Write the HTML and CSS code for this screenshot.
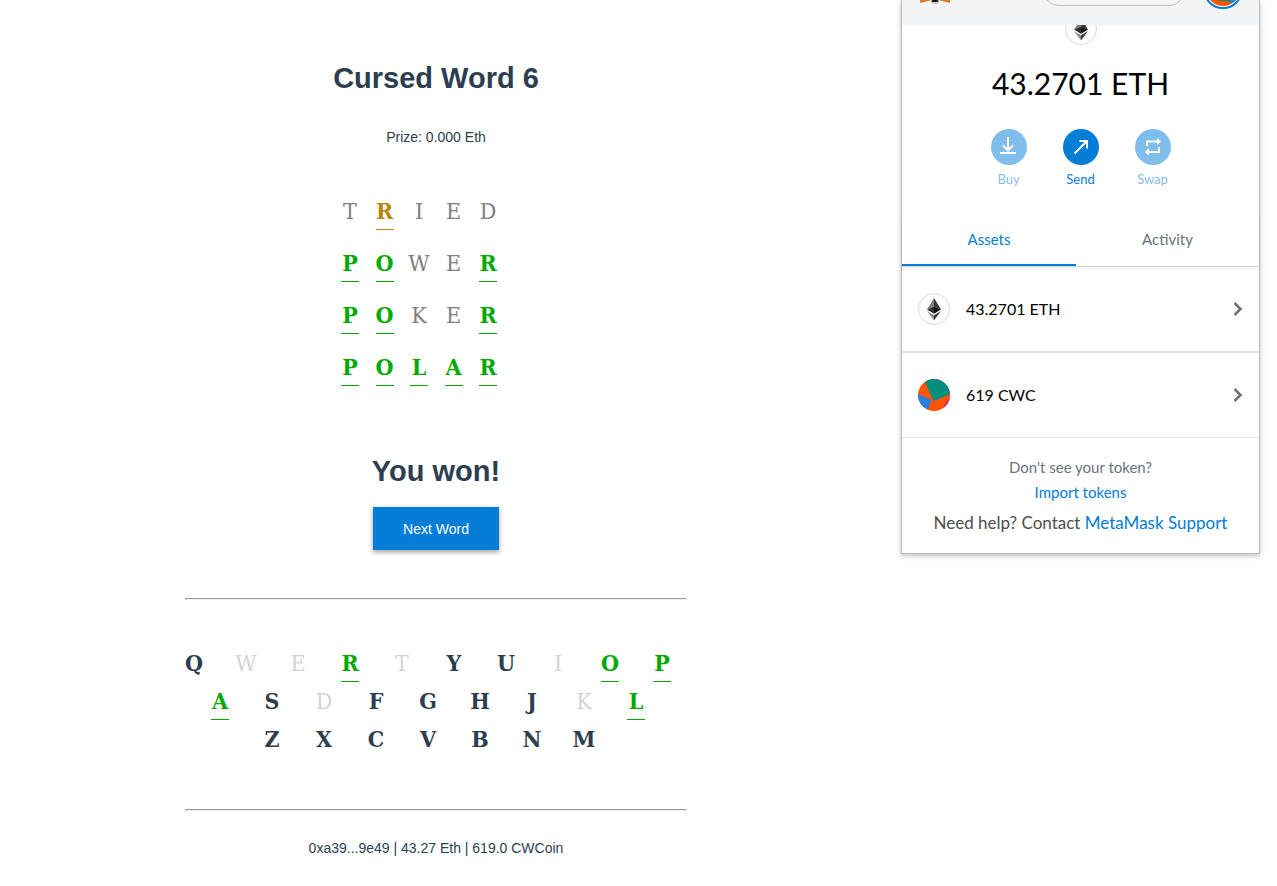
FILE: index.html
```
<!DOCTYPE html>
<html lang="en">
<head>
<meta charset="utf-8">
<title>Cursed Word</title>
<link rel="stylesheet" href="styles.css">
</head>
<body>
<svg class="sprite" aria-hidden="true">
  <symbol id="eth" viewBox="1 1 30 30">
    <path fill="#828384" d="M16 5 9 16.600 16 13.600z"/>
    <path fill="#343434" d="M16 5v8.600l7 3z"/>
    <path fill="#2f3030" d="M9 16.600 16 13.600v7.200z"/>
    <path fill="#141414" d="M16 13.600l7 3-7 4.200z"/>
    <path fill="#8c8c8c" d="M9 18 16 22.200V27.500z"/>
    <path fill="#3c3c3b" d="M16 22.200 23 18l-7 9.500z"/>
  </symbol>
  <symbol id="chevron" viewBox="0 0 10 14">
    <path d="M1.500 1 7.500 7 1.500 13" fill="none" stroke="#6a737d" stroke-width="2.600"/>
  </symbol>
</svg>
<div class="page">
  <main class="game">
    <h1 class="title">Cursed Word 6</h1>
    <p class="prize">Prize: 0.000 Eth</p>
    <section class="guesses" aria-label="Guesses">
      <div class="word"><span class="letter miss">T</span><span class="letter near">R</span><span class="letter miss">I</span><span class="letter miss">E</span><span class="letter miss">D</span></div>
      <div class="word"><span class="letter hit">P</span><span class="letter hit">O</span><span class="letter miss">W</span><span class="letter miss">E</span><span class="letter hit">R</span></div>
      <div class="word"><span class="letter hit">P</span><span class="letter hit">O</span><span class="letter miss">K</span><span class="letter miss">E</span><span class="letter hit">R</span></div>
      <div class="word"><span class="letter hit">P</span><span class="letter hit">O</span><span class="letter hit">L</span><span class="letter hit">A</span><span class="letter hit">R</span></div>
    </section>
    <h2 class="title result">You won!</h2>
    <button class="next" type="button">Next Word</button>
    <hr class="rule">
    <section class="keyboard" aria-label="Used letters">
      <div class="keys"><span class="letter">Q</span><span class="letter used">W</span><span class="letter used">E</span><span class="letter hit">R</span><span class="letter used">T</span><span class="letter">Y</span><span class="letter">U</span><span class="letter used">I</span><span class="letter hit">O</span><span class="letter hit">P</span></div>
      <div class="keys second"><span class="letter hit">A</span><span class="letter">S</span><span class="letter used">D</span><span class="letter">F</span><span class="letter">G</span><span class="letter">H</span><span class="letter">J</span><span class="letter used">K</span><span class="letter hit">L</span></div>
      <div class="keys third"><span class="letter">Z</span><span class="letter">X</span><span class="letter">C</span><span class="letter">V</span><span class="letter">B</span><span class="letter">N</span><span class="letter">M</span></div>
    </section>
    <hr class="rule">
    <p class="account">0xa39...9e49 | 43.27 Eth | 619.0 CWCoin</p>
  </main>

  <aside class="wallet" aria-label="Wallet">
    <header class="wallet-bar">
      <svg class="fox" viewBox="0 0 32 32" aria-hidden="true">
        <path fill="#e2761b" d="M2 4 14 12H18L30 4 30 31 20 28.500H12L2 31z"/>
        <path fill="#d7c1b3" d="M11 24H21L20 30 18 32H14L12 30z"/>
        <path fill="#233447" d="M13 24H19V30H13z"/>
        <path fill="#161616" d="M14 26H18V30H14z"/>
      </svg>
      <span class="network"></span>
      <svg class="avatar" viewBox="0 0 40 40" aria-hidden="true">
        <clipPath id="face"><circle cx="20" cy="20" r="17"/></clipPath>
        <circle cx="20" cy="20" r="19" fill="#fff" stroke="#037dd6" stroke-width="2"/>
        <g clip-path="url(#face)">
          <path fill="#ff5500" d="M0 0H40V40H0z"/>
          <path fill="#028e7e" d="M10 10H30V33L10 31z"/>
          <path fill="#2880e0" d="M26 28 29 36 40 40V20z"/>
        </g>
      </svg>
    </header>
    <div class="coin-clip"><svg class="coin" aria-hidden="true"><use href="#eth"/></svg></div>
    <p class="balance">43.2701 ETH</p>
    <div class="actions">
      <button class="action" type="button" disabled>
        <svg class="action-icon" viewBox="0 0 36 36" aria-hidden="true"><circle cx="18" cy="18" r="18" fill="#037dd6"/><path d="M17 8V21M12 16.500 17 21.500 22 16.500M9 24H25" fill="none" stroke="#fff" stroke-width="2"/></svg>
        <span>Buy</span>
      </button>
      <button class="action" type="button">
        <svg class="action-icon" viewBox="0 0 36 36" aria-hidden="true"><circle cx="18" cy="18" r="18" fill="#037dd6"/><path d="M11.500 24.500 24 12M16.500 12H24V19.500" fill="none" stroke="#fff" stroke-width="2"/></svg>
        <span>Send</span>
      </button>
      <button class="action" type="button" disabled>
        <svg class="action-icon" viewBox="0 0 36 36" aria-hidden="true"><circle cx="18" cy="18" r="18" fill="#037dd6"/><path d="M12 17V12.500H23M24 18V23H13" fill="none" stroke="#fff" stroke-width="2"/><path fill="#fff" d="M22 9 26 12.500 22 16zM14 19 10 23 14 26.500z"/></svg>
        <span>Swap</span>
      </button>
    </div>
    <nav class="tabs">
      <button class="tab active" type="button">Assets</button>
      <button class="tab" type="button">Activity</button>
    </nav>
    <ul class="assets">
      <li><button class="asset native" type="button">
        <svg class="token ring" aria-hidden="true"><use href="#eth"/></svg>
        <span class="amount">43.2701 ETH</span>
        <svg class="chevron" aria-hidden="true"><use href="#chevron"/></svg>
      </button></li>
      <li><button class="asset" type="button">
        <svg class="token" viewBox="0 0 32 32" aria-hidden="true">
          <clipPath id="disc"><circle cx="16" cy="16" r="16"/></clipPath>
          <g clip-path="url(#disc)">
            <path fill="#ff5500" d="M0 0H32V32H0z"/>
            <path fill="#028e7e" d="M5 0 7 3 15.500 22 32 15V0z"/>
            <path fill="#2880e0" d="M0 15 13.500 21 9 32H0z"/>
            <path fill="#f81672" d="M32 17 23.500 31 32 32z"/>
          </g>
        </svg>
        <span class="amount">619 CWC</span>
        <svg class="chevron" aria-hidden="true"><use href="#chevron"/></svg>
      </button></li>
    </ul>
    <div class="help">
      <p class="hint">Don't see your token?</p>
      <a class="hint import" href="#import">Import tokens</a>
      <p class="support">Need help? Contact <a href="#support">MetaMask Support</a></p>
    </div>
  </aside>
</div>
</body>
</html>
```
FILE: styles.css
```
* { box-sizing: border-box; }

body {
  margin: 0;
  background: #fff;
  color: #2c3e50;
  font: 14px/18px "Liberation Sans", Arial, sans-serif;
}

h1, h2, p, ul { margin: 0; padding: 0; }
ul { list-style: none; }
a { color: #037dd6; text-decoration: none; }
button { border: 0; padding: 0; background: none; font: inherit; color: inherit; cursor: pointer; }
.sprite { display: none; }

.page {
  display: grid;
  grid-template-columns: minmax(0, 1fr) 359px;
  align-items: start;
  gap: 29px;
  padding-right: 17px;
}

.game {
  display: flex;
  flex-direction: column;
  align-items: center;
  padding-top: 60px;
}

.title { font-size: 29px; line-height: 36px; font-weight: bold; }
.prize { margin-top: 32px; }

.guesses {
  display: grid;
  gap: 14px;
  margin-top: 46px;
  padding-right: 34px;
}
.word { display: flex; justify-content: space-between; width: 156px; }

.letter {
  display: flex;
  justify-content: center;
  width: 18px;
  height: 38px;
  border-bottom: 1px solid transparent;
  font: bold 23px/38px "DejaVu Serif Condensed", "DejaVu Serif", "Courier New", monospace;
}
.miss, .used { font-weight: normal; }
.miss { color: #808080; }
.used { color: #d3d3d3; }
.near { color: #b8860b; border-color: #b8860b; }
.hit { color: #0a0; border-color: #0a0; }

.result { margin-top: 67px; }
.next {
  margin-top: 18px;
  padding: 13px 30px 12px;
  background: #037dd6;
  color: #fff;
  box-shadow: 0 2px 5px rgba(0, 0, 0, 0.4);
}
.rule {
  width: 502px;
  max-width: 100%;
  margin: 48px 0 0;
}

.keyboard { width: 502px; max-width: 100%; margin-top: 44px; padding-bottom: 3px; }
.keys { display: flex; gap: 34px; }
.second { padding-left: 26px; }
.third { padding-left: 78px; }
.account { margin-top: 28px; }

.wallet {
  border: 1px solid #b8bcbf;
  border-top: 0;
  box-shadow: 0 2px 5px rgba(0, 0, 0, 0.25);
  color: #24292e;
  font-family: Lato, sans-serif;
}
.wallet-bar {
  display: flex;
  align-items: flex-end;
  height: 25px;
  padding: 0 16px;
  overflow: hidden;
  background: #f2f4f6;
}
.fox { flex: none; width: 34px; height: 34px; margin-bottom: 21px; }
.network {
  width: 142px;
  height: 32px;
  margin: 0 18px 19px auto;
  border: 1px solid #bbc0c5;
  border-radius: 16px;
}
.avatar { flex: none; width: 40px; height: 40px; margin-bottom: 16px; }

.coin-clip {
  display: flex;
  justify-content: center;
  align-items: flex-end;
  height: 20px;
  overflow: hidden;
}
.coin, .ring { border: 1px solid #d6d9dc; border-radius: 50%; }
.coin { flex: none; width: 32px; height: 32px; }
.balance { margin-top: 18px; color: #000; font-size: 30px; line-height: 40px; text-align: center; }

.actions { display: flex; justify-content: center; gap: 36px; margin-top: 26px; }
.action {
  display: flex;
  flex-direction: column;
  align-items: center;
  gap: 5px;
  width: 36px;
  color: #037dd6;
  font-size: 13px;
}
.action:disabled { opacity: 0.5; }
.action-icon { width: 36px; height: 36px; }

.tabs {
  display: grid;
  grid-template-columns: 174fr 183fr;
  margin-top: 25px;
  border-bottom: 1px solid #d6d9dc;
  box-shadow: 0 2px 4px rgba(0, 0, 0, 0.06);
}
.tab { height: 53px; border-bottom: 2px solid transparent; color: #6a737d; font-size: 15px; }
.active { border-color: #037dd6; color: #037dd6; }

.asset {
  display: flex;
  align-items: center;
  gap: 16px;
  width: 100%;
  height: 85px;
  padding: 0 16px;
  border-bottom: 1px solid #e1e4e6;
}
.native { height: 86px; border-bottom-width: 2px; }
.token { flex: none; width: 32px; height: 32px; }
.amount { flex: 1; color: #000; font-size: 16px; text-align: left; }
.chevron { width: 10px; height: 14px; }

.help { padding: 20px 16px; text-align: center; }
.hint { display: block; color: #6a737d; font-size: 15px; }
.import { margin-top: 7px; color: #037dd6; }
.support { margin-top: 12px; color: #4d4d4d; font-size: 17px; line-height: 20px; }
```
